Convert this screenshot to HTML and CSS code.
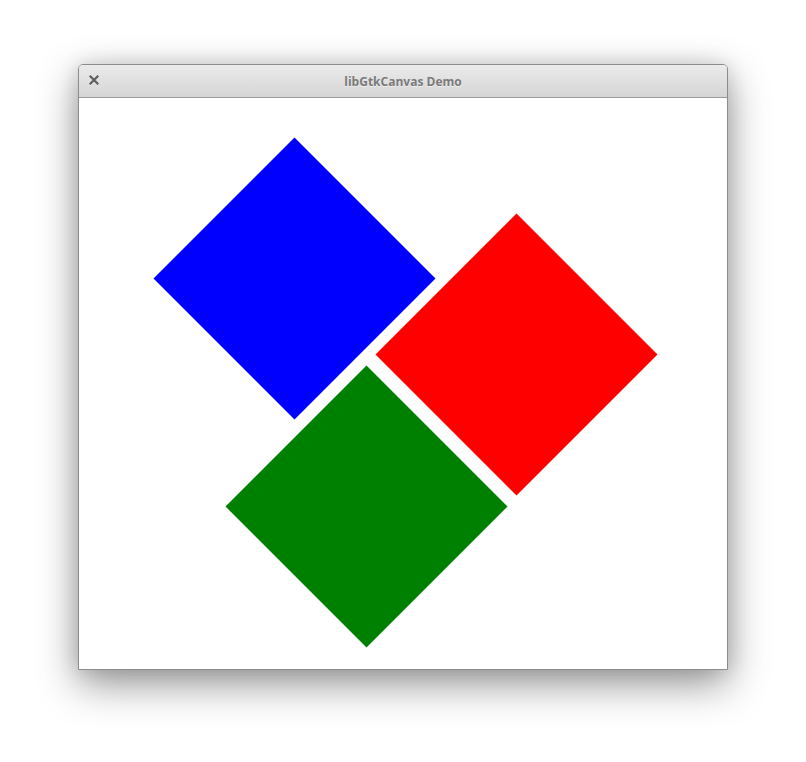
FILE: index.html
```html
<!DOCTYPE html>
<html>
<head>
<meta charset="utf-8">
<link rel="stylesheet" href="styles.css">
</head>
<body>
<div class="window">
  <div class="titlebar">
    <svg class="close" width="10" height="10" viewBox="0 0 10 10">
      <path d="M1.5 1.5 L8.5 8.5 M8.5 1.5 L1.5 8.5" stroke="#5f5f5f" stroke-width="2.2" stroke-linecap="square"/>
    </svg>
    <span class="title">libGtkCanvas Demo</span>
  </div>
  <div class="content">
    <svg class="canvas" width="648" height="571" viewBox="0 0 648 571">
      <polygon fill="#0000ff" points="215.5,39.5 356.5,180.5 215.5,321.5 74.5,180.5"/>
      <polygon fill="#ff0000" points="437.5,115.5 578.5,256.5 437.5,397.5 296.5,256.5"/>
      <polygon fill="#008000" points="287.5,267.5 428.5,408.5 287.5,549.5 146.5,408.5"/>
    </svg>
  </div>
</div>
</body>
</html>
```
FILE: styles.css
```css
html, body {
  margin: 0;
  padding: 0;
  background: #ffffff;
}
body {
  width: 806px;
  height: 762px;
  overflow: hidden;
  padding-top: 64px;
  padding-left: 78px;
  box-sizing: border-box;
}
.window {
  width: 650px;
  box-sizing: border-box;
  border: 1px solid #8c8c8c;
  border-radius: 5px 5px 0 0;
  background: #fff;
  box-shadow: 0 14px 40px rgba(0,0,0,0.42), 0 0 20px rgba(0,0,0,0.12);
}
.titlebar {
  position: relative;
  height: 32px;
  border-bottom: 1px solid #9a9a9a;
  border-radius: 4px 4px 0 0;
  background: linear-gradient(#ebebeb, #d5d5d5);
  display: flex;
  align-items: center;
  justify-content: center;
}
.close {
  position: absolute;
  left: 10px;
  top: 10px;
}
.title {
  font-family: "Open Sans", "DejaVu Sans", sans-serif;
  font-weight: bold;
  font-size: 12px;
  color: #7a7a7a;
  text-shadow: 0 1px 0 rgba(255,255,255,0.5);
}
.content {
  height: 571px;
  background: #ffffff;
}
.canvas {
  display: block;
}
```
